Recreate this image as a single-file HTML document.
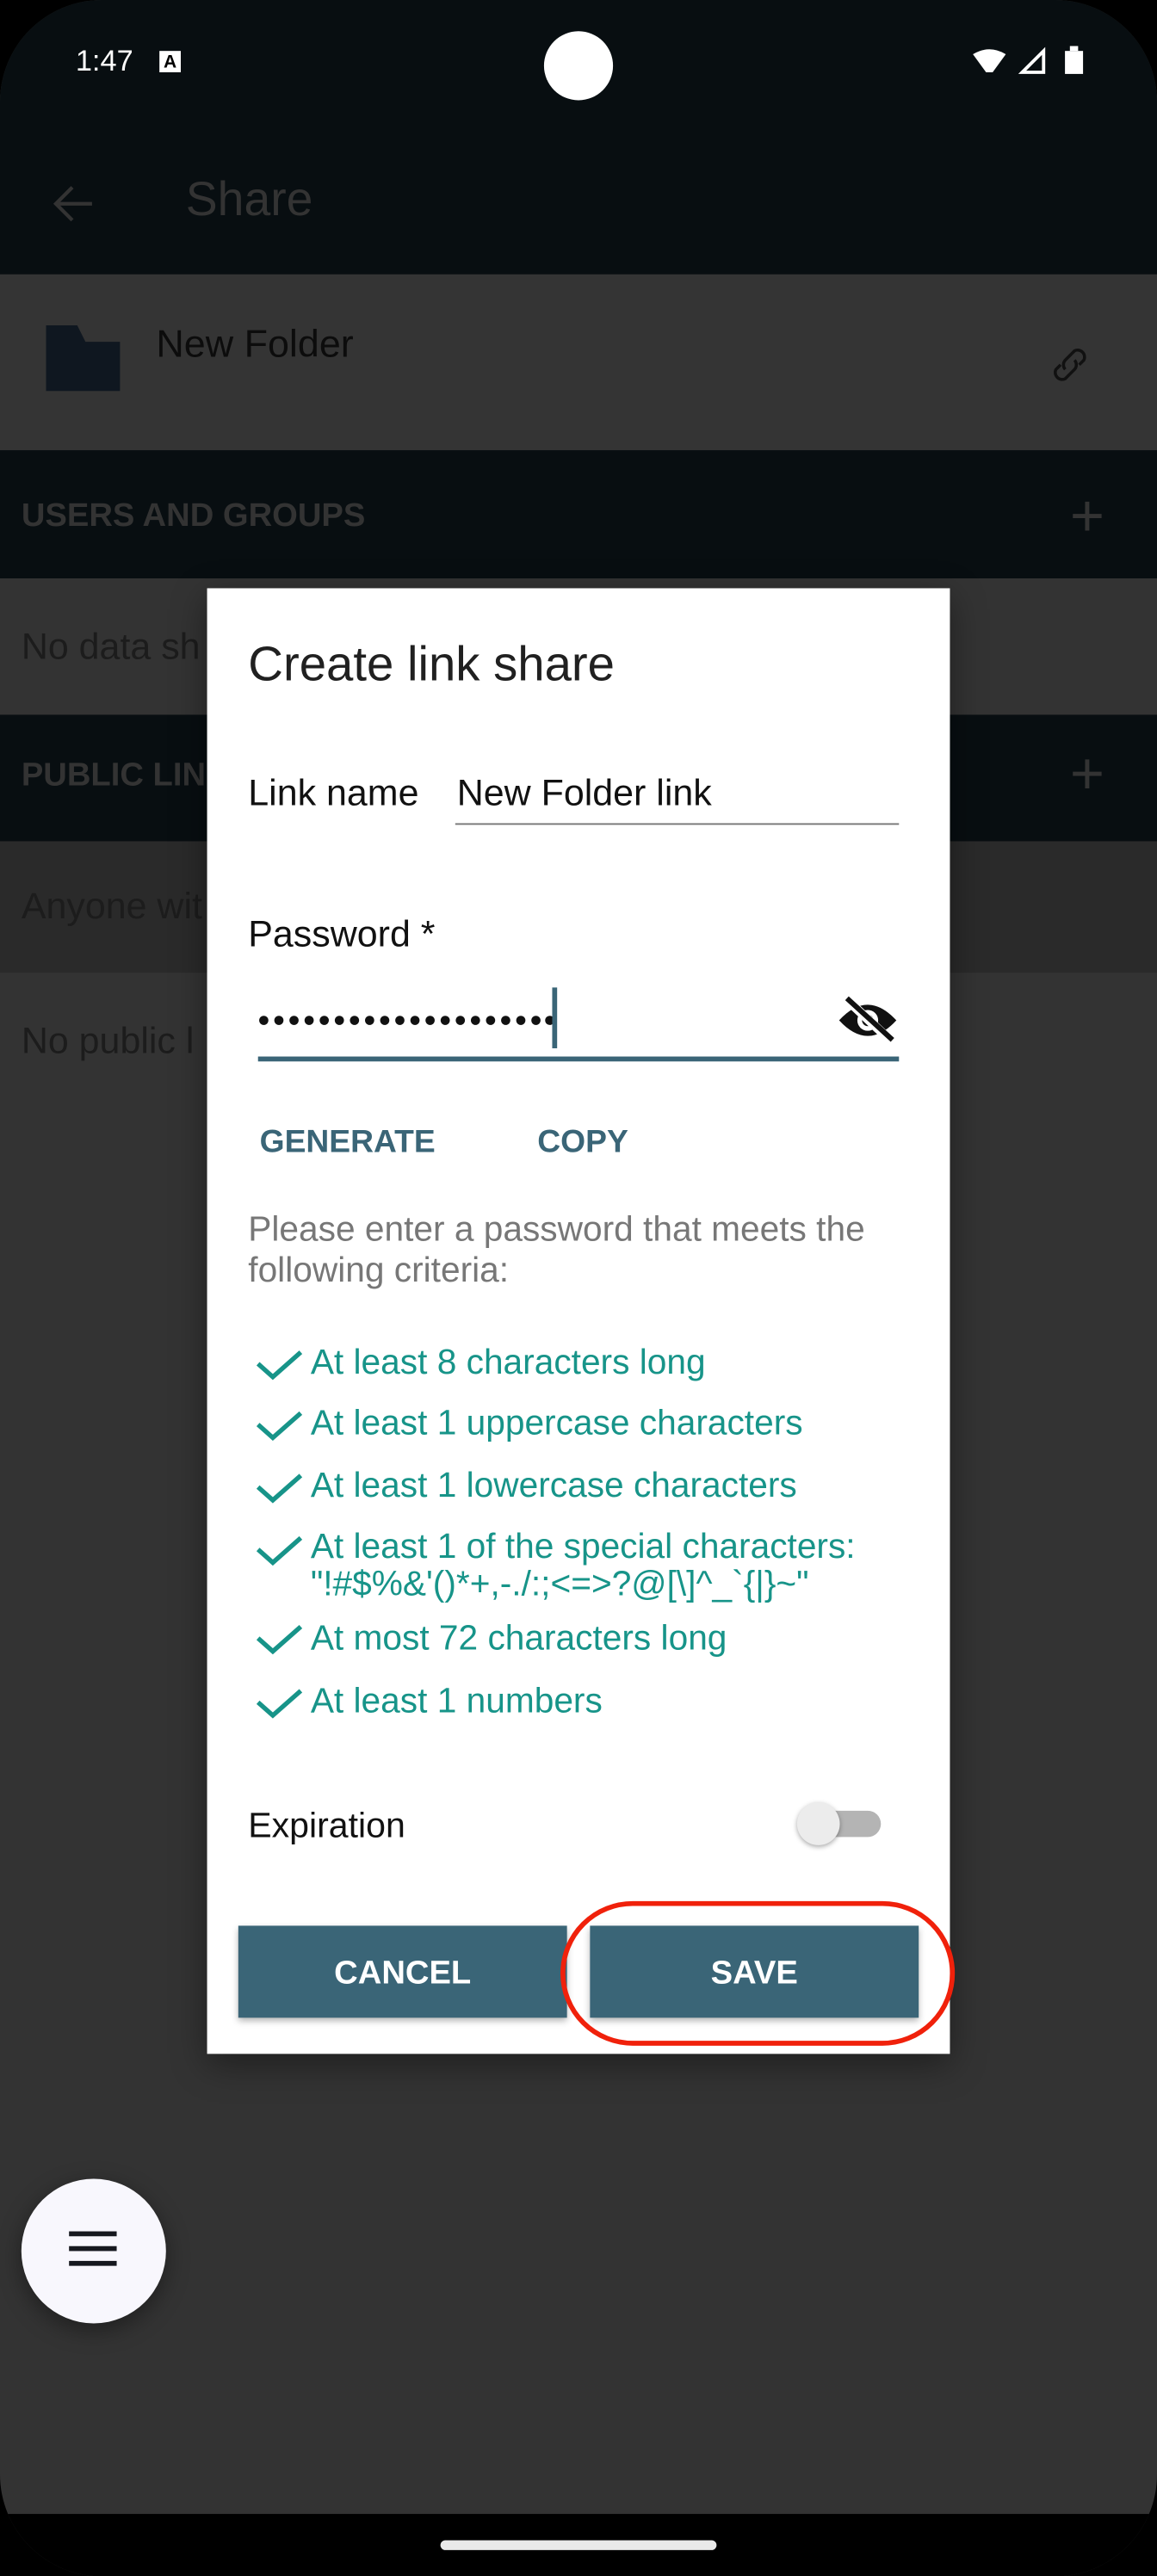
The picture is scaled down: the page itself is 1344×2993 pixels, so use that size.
<!DOCTYPE html>
<html><head><meta charset="utf-8"><style>
html,body{margin:0;padding:0;background:#000;}
body{width:1344px;height:2992px;overflow:hidden;}
#w{position:absolute;left:0;top:0;width:704px;height:1568px;transform:scale(1.909091);transform-origin:0 0;font-family:"Liberation Sans",sans-serif;background:#000;}
#scr{position:absolute;left:0;top:0;width:704px;height:1568px;border-radius:62px;overflow:hidden;background:#333;}
.a{position:absolute;}
.t{position:absolute;white-space:nowrap;}
.g{color:#179489;font-size:21.3px;}
</style></head><body><div id="w"><div id="scr">
<div class="a" style="left:0;top:0;width:704px;height:167px;background:#080e11"></div>
<div class="t" style="left:46px;top:27px;color:#fff;font-size:18px">1:47</div>
<div class="a" style="left:97px;top:31px;width:13px;height:13px;background:#fff;color:#000;font-size:11px;font-weight:bold;text-align:center;line-height:14px">A</div>
<div class="a" style="left:331px;top:19px;width:42px;height:42px;border-radius:50%;background:#fff"></div>
<svg class="a" style="left:590px;top:28px" width="75" height="20" viewBox="0 0 75 20"><path d="M2 5 Q12 -1 22 5 L14 16 L10 16 Z" fill="#fff"/><path d="M32 16 L45 3 L45 16 Z" fill="none" stroke="#fff" stroke-width="2"/><rect x="58" y="3" width="11" height="14" fill="#fff"/><rect x="61" y="0" width="5" height="3" fill="#fff"/></svg>
<svg class="a" style="left:30px;top:110px" width="30" height="28" viewBox="0 0 30 28"><path d="M26 14 H4 M14 4 L4 14 L14 24" fill="none" stroke="#333" stroke-width="2.2"/></svg>
<div class="t" style="left:113px;top:106px;color:#333;font-size:29px">Share</div>
<div class="a" style="left:0;top:167px;width:704px;height:107px;background:#343434"></div>
<svg class="a" style="left:28px;top:198px" width="46" height="40" viewBox="0 0 46 40"><path d="M0 0 H19 L24 10 H45 V40 H0 Z" fill="#0f1720"/></svg>
<div class="t" style="left:95px;top:196px;color:#0c0c0c;font-size:23.5px">New Folder</div>
<svg class="a" style="left:634px;top:205px" width="34" height="34" viewBox="0 0 24 24"><path d="M10 14 a3 3 0 0 1 0-4 l4-4 a3 3 0 0 1 4 4 l-2 2 M14 10 a3 3 0 0 1 0 4 l-4 4 a3 3 0 0 1 -4 -4 l2 -2" fill="none" stroke="#111" stroke-width="1.3"/></svg>
<div class="a" style="left:0;top:274px;width:704px;height:78px;background:#080e11"></div>
<div class="t" style="left:13px;top:303px;color:#333;font-size:20px;font-weight:bold">USERS AND GROUPS</div>
<div class="t" style="left:651px;top:293px;color:#333;font-size:36px;font-weight:300">+</div>
<div class="t" style="left:13px;top:381px;color:#1c1c1c;font-size:22.5px">No data sh</div>
<div class="a" style="left:0;top:435px;width:704px;height:77px;background:#080e11"></div>
<div class="t" style="left:13px;top:461px;color:#333;font-size:20px;font-weight:bold">PUBLIC LIN</div>
<div class="t" style="left:651px;top:450px;color:#333;font-size:36px;font-weight:300">+</div>
<div class="a" style="left:0;top:512px;width:704px;height:80px;background:#2a2a2a"></div>
<div class="t" style="left:13px;top:539px;color:#1c1c1c;font-size:22.5px">Anyone wit</div>
<div class="t" style="left:13px;top:621px;color:#1c1c1c;font-size:22.5px">No public l</div>
<div class="a" style="left:13px;top:1326px;width:88px;height:88px;border-radius:50%;background:#f8f7fd;box-shadow:0 4px 14px rgba(0,0,0,.4)"></div>
<div class="a" style="left:42px;top:1358px;width:29px;height:3px;background:#16181f;box-shadow:0 9px 0 #16181f,0 18px 0 #16181f"></div>
<div class="a" style="left:0;top:1530px;width:704px;height:38px;background:#000"></div>
<div class="a" style="left:268px;top:1546px;width:168px;height:6px;border-radius:3px;background:#e9e9e9"></div>

<div class="a" style="left:126px;top:358px;width:452px;height:892px;background:#fff;box-shadow:0 6px 20px rgba(0,0,0,.4)"></div>
<div class="t" style="left:151px;top:388px;color:#202020;font-size:29.5px">Create link share</div>
<div class="t" style="left:151px;top:470px;color:#111;font-size:22.5px">Link name</div>
<div class="t" style="left:278px;top:470px;color:#111;font-size:22.5px">New Folder link</div>
<div class="a" style="left:277px;top:501px;width:270px;height:1px;background:#777"></div>
<div class="t" style="left:151px;top:556px;color:#111;font-size:22.5px">Password *</div>
<svg class="a" style="left:155px;top:615px" width="185" height="12" viewBox="0 0 185 12" fill="#111">
<circle cx="5.5" cy="6" r="2.8"/><circle cx="14.7" cy="6" r="2.8"/><circle cx="23.9" cy="6" r="2.8"/><circle cx="33.1" cy="6" r="2.8"/><circle cx="42.3" cy="6" r="2.8"/><circle cx="51.5" cy="6" r="2.8"/><circle cx="60.7" cy="6" r="2.8"/><circle cx="69.9" cy="6" r="2.8"/><circle cx="79.1" cy="6" r="2.8"/><circle cx="88.3" cy="6" r="2.8"/><circle cx="97.5" cy="6" r="2.8"/><circle cx="106.7" cy="6" r="2.8"/><circle cx="115.9" cy="6" r="2.8"/><circle cx="125.1" cy="6" r="2.8"/><circle cx="134.3" cy="6" r="2.8"/><circle cx="143.5" cy="6" r="2.8"/><circle cx="152.7" cy="6" r="2.8"/><circle cx="161.9" cy="6" r="2.8"/><circle cx="171.1" cy="6" r="2.8"/><circle cx="179.5" cy="6" r="2.8"/></svg>
<div class="a" style="left:336px;top:601px;width:3px;height:37px;background:#3a6577"></div>
<svg class="a" style="left:509px;top:605px" width="38" height="32" viewBox="0 0 24 20"><path d="M1 10 Q12 -2 23 10 Q12 22 1 10 Z" fill="#111"/><circle cx="12" cy="10" r="4" fill="#fff"/><circle cx="12" cy="10" r="2.2" fill="#111"/><path d="M4 2 L21 18" stroke="#fff" stroke-width="3.5"/><path d="M4 1.5 L21.5 17.5" stroke="#111" stroke-width="2"/></svg>
<div class="a" style="left:157px;top:643px;width:390px;height:2.5px;background:#3a6577"></div>
<div class="t" style="left:158px;top:684px;color:#3a6577;font-size:19.5px;font-weight:bold">GENERATE</div>
<div class="t" style="left:327px;top:684px;color:#3a6577;font-size:19.5px;font-weight:bold">COPY</div>
<div class="t" style="left:151px;top:736px;color:#777;font-size:21.3px;line-height:25px">Please enter a password that meets the<br>following criteria:</div>
<svg class="a" style="left:154px;top:816px" width="36" height="240" viewBox="0 0 36 240" fill="none" stroke="#179489" stroke-width="2.8"><path d="M3 14 L12 22 L29 7"/><path d="M3 51 L12 59 L29 44"/><path d="M3 89 L12 97 L29 82"/><path d="M3 127 L12 135 L29 120"/><path d="M3 181 L12 189 L29 174"/><path d="M3 220 L12 228 L29 213"/></svg>
<div class="t g" style="left:189px;top:817px">At least 8 characters long</div>
<div class="t g" style="left:189px;top:854px">At least 1 uppercase characters</div>
<div class="t g" style="left:189px;top:892px">At least 1 lowercase characters</div>
<div class="t g" style="left:189px;top:930px;line-height:23px">At least 1 of the special characters:<br>"!#$%&amp;'()*+,-./:;&lt;=&gt;?@[\]^_`{|}~"</div>
<div class="t g" style="left:189px;top:985px">At most 72 characters long</div>
<div class="t g" style="left:189px;top:1023px">At least 1 numbers</div>
<div class="t" style="left:151px;top:1099px;color:#111;font-size:21.5px">Expiration</div>
<div class="a" style="left:494px;top:1102px;width:42px;height:16px;border-radius:8px;background:#b4b4b4"></div>
<div class="a" style="left:485px;top:1097px;width:26px;height:26px;border-radius:50%;background:#ececec;box-shadow:0 1px 3px rgba(0,0,0,.35)"></div>
<div class="a" style="left:145px;top:1172px;width:200px;height:56px;background:#3a6577;box-shadow:0 2px 4px rgba(0,0,0,.3);color:#fff;font-size:20px;font-weight:bold;text-align:center;line-height:58px">CANCEL</div>
<div class="a" style="left:359px;top:1172px;width:200px;height:56px;background:#3a6577;box-shadow:0 2px 4px rgba(0,0,0,.3);color:#fff;font-size:20px;font-weight:bold;text-align:center;line-height:58px">SAVE</div>
<div class="a" style="left:341px;top:1157px;width:234px;height:82px;border:3.5px solid #f0210b;border-radius:60px"></div>
</div></div></body></html>
